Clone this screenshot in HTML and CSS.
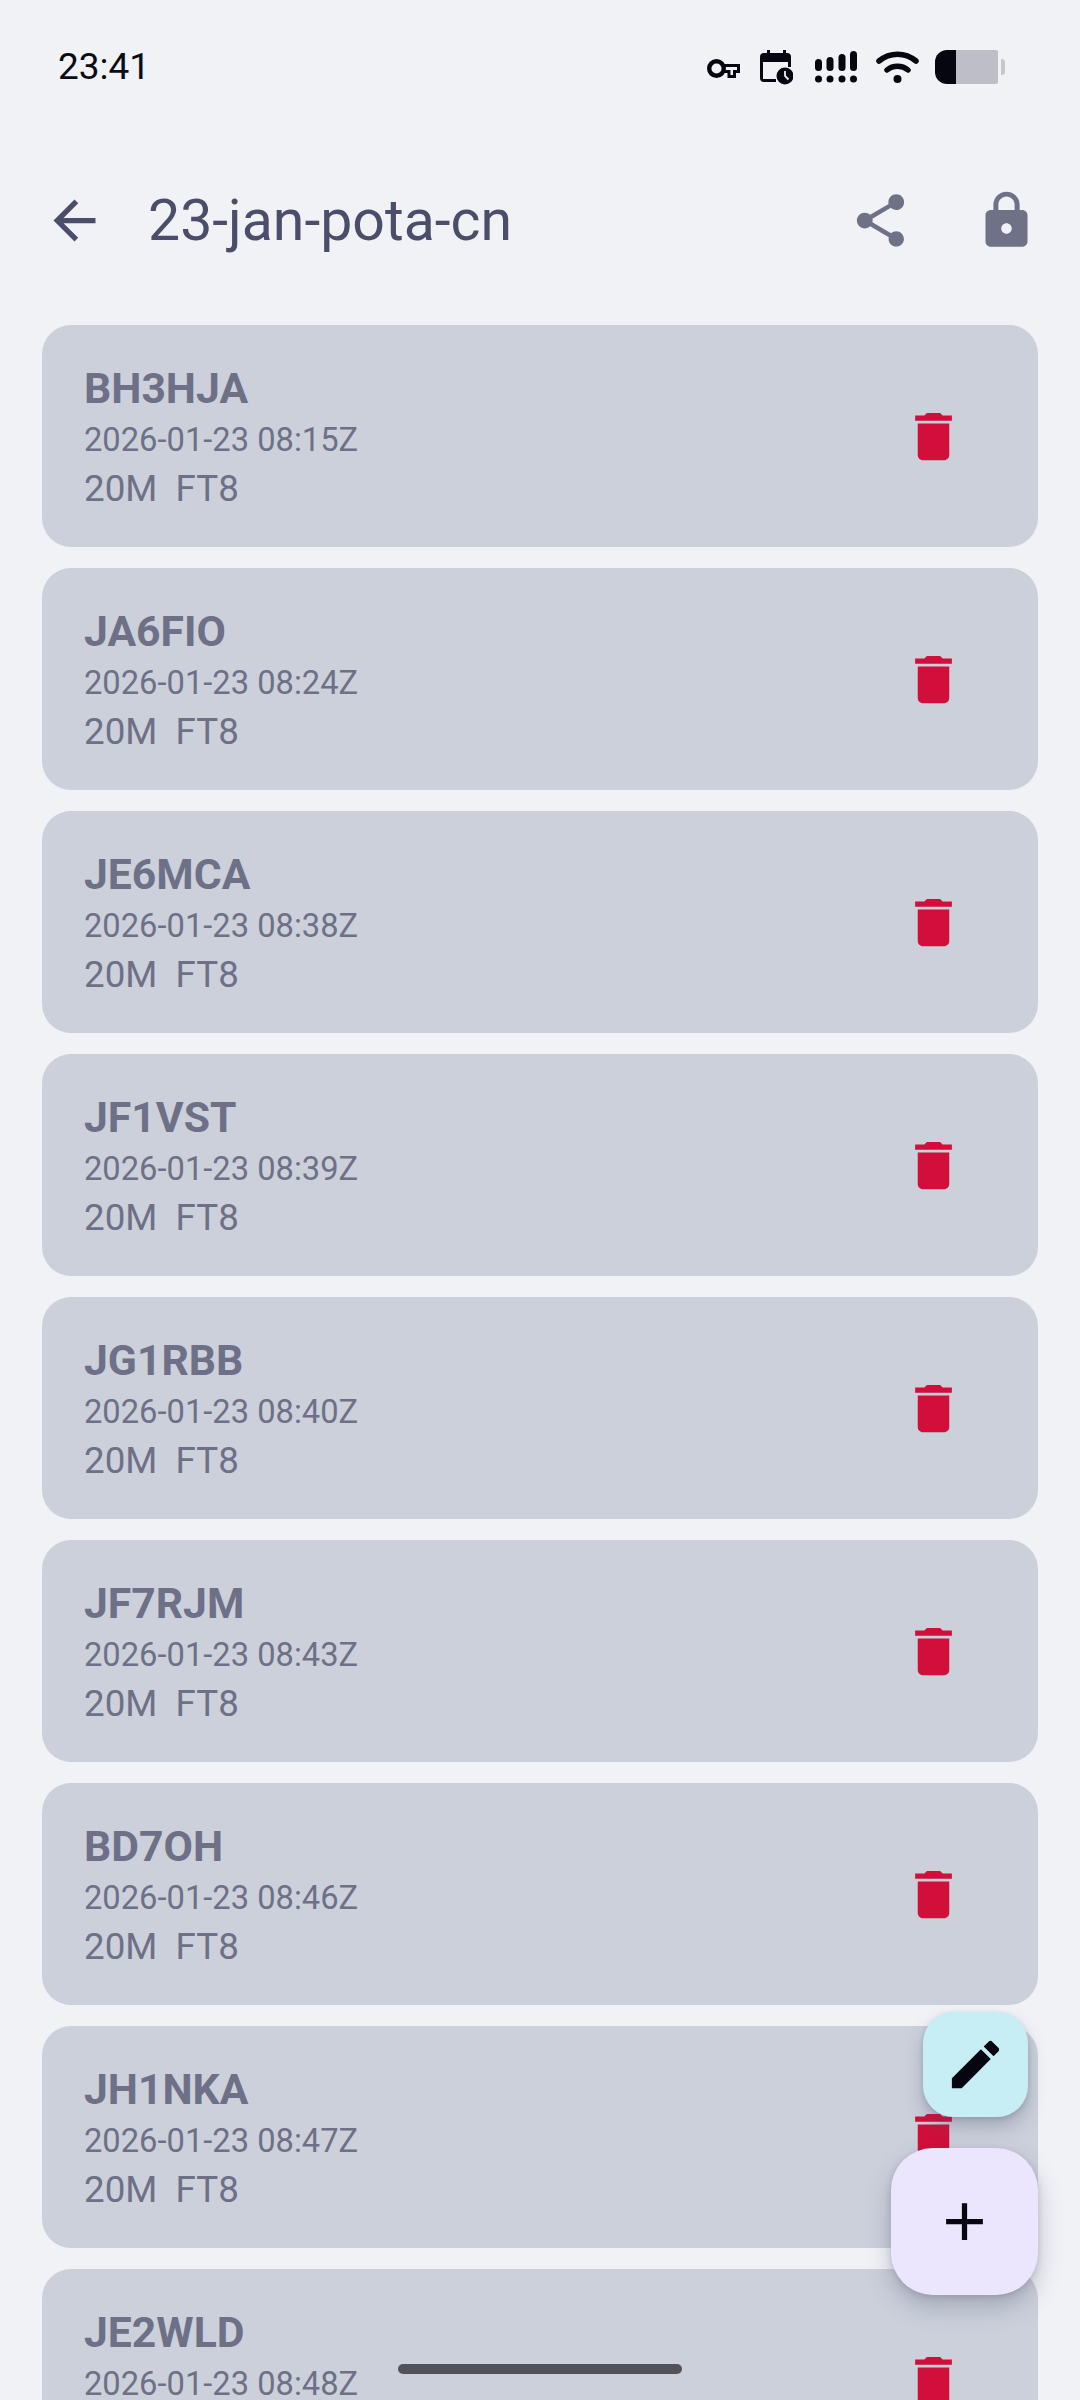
FILE: index.html
```html
<!DOCTYPE html>
<html lang="en">
<head>
<meta charset="utf-8">
<title>23-jan-pota-cn</title>
<link rel="stylesheet" href="styles.css">
</head>
<body>
<div class="screen">
  <header class="status">
    <span class="time">23:41</span>
    <div class="status-icons">
      <svg class="si-key" viewBox="0 0 33 19"><circle cx="9.500" cy="9.500" r="7.300" fill="none" stroke="#05060f" stroke-width="4.400"/><path d="M15 6.500H31.500V12.500H27.500V17.500H22V12.500H15" fill="none" stroke="#05060f" stroke-width="3"/></svg>
      <svg class="si-cal" viewBox="0 0 33 35"><path d="M7 0h3v3h13V0h3v3h1a4 4 0 0 1 4 4v10h-3v-5H3v17h13v3H4a4 4 0 0 1-4-4V7a4 4 0 0 1 4-4h3z" fill="#05060f"/><circle cx="25" cy="26" r="8.500" fill="#05060f"/><path d="M25 21v5l3.500 3.500" stroke="#f0f2f6" stroke-width="1.800" fill="none"/></svg>
      <svg class="si-sig" viewBox="0 0 42 32"><g fill="#05060f"><circle cx="3.500" cy="28" r="3.500"/><circle cx="15" cy="28" r="3.500"/><circle cx="27" cy="28" r="3.500"/><circle cx="38.500" cy="28" r="3.500"/><rect x="0" y="8" width="7" height="12" rx="3.500"/><rect x="11.500" y="6" width="7" height="14" rx="3.500"/><rect x="23.500" y="3" width="7" height="17" rx="3.500"/><rect x="35" y="0" width="7" height="20" rx="3.500"/></g></svg>
      <svg class="si-wifi" viewBox="0 0 43 32"><g fill="none" stroke="#05060f" stroke-width="5.500" stroke-linecap="round"><path d="M3 10C14 1 29 1 40 10"/><path d="M11 19c6-5 15-5 21 0"/></g><circle cx="21.500" cy="28" r="4" fill="#05060f"/></svg>
      <svg class="si-bat" viewBox="0 0 70 34"><path d="M21 0h39a6 6 0 0 1 3 1v32a6 6 0 0 1-3 1H21z" fill="#bdbec8"/><path d="M12 0h9v34h-9A12 12 0 0 1 0 22V12A12 12 0 0 1 12 0z" fill="#05060f"/><path d="M66 9h1a3 3 0 0 1 3 3v10a3 3 0 0 1-3 3h-1z" fill="#c6c7d0"/></svg>
    </div>
  </header>

  <nav class="toolbar">
    <svg class="icon icon-title" viewBox="0 0 24 24"><path d="M20 11H7.830l5.590-5.590L12 4l-8 8 8 8 1.410-1.410L7.830 13H20v-2z"/></svg>
    <h1 class="title">23-jan-pota-cn</h1>
    <svg class="icon icon-share" viewBox="0 0 24 24"><path d="M18 16.080c-.76 0-1.440.3-1.960.77L8.910 12.700c.05-.23.09-.46.09-.7s-.04-.47-.09-.7l7.050-4.110c.54.5 1.250.81 2.040.81 1.660 0 3-1.340 3-3s-1.340-3-3-3-3 1.340-3 3c0 .24.04.47.09.7L8.040 9.810C7.500 9.310 6.790 9 6 9c-1.660 0-3 1.340-3 3s1.340 3 3 3c.79 0 1.500-.31 2.040-.81l7.120 4.160c-.05.21-.08.43-.08.65 0 1.610 1.310 2.920 2.920 2.920 1.610 0 2.920-1.310 2.920-2.920s-1.310-2.920-2.920-2.920z"/></svg>
    <svg class="icon icon-lock" viewBox="0 0 24 24"><path d="M18 8h-1V6c0-2.760-2.240-5-5-5S7 3.240 7 6v2H6c-1.100 0-2 .9-2 2v10c0 1.100.9 2 2 2h12c1.100 0 2-.9 2-2V10c0-1.100-.9-2-2-2zm-6 9c-1.100 0-2-.9-2-2s.9-2 2-2 2 .9 2 2-.9 2-2 2zm3.100-9H8.900V6c0-1.710 1.390-3.100 3.100-3.100 1.710 0 3.100 1.390 3.100 3.100v2z"/></svg>
  </nav>

  <main class="list">
    <article class="card"><div class="info"><div class="call">BH3HJA</div><div class="date">2026-01-23 08:15Z</div><div class="band">20M  FT8</div></div><svg class="trash" viewBox="0 0 24 24"><path d="M6 19c0 1.100.9 2 2 2h8c1.100 0 2-.9 2-2V7H6v12zM19 4h-3.500l-1-1h-5l-1 1H5v2h14V4z"/></svg></article>
    <article class="card"><div class="info"><div class="call">JA6FIO</div><div class="date">2026-01-23 08:24Z</div><div class="band">20M  FT8</div></div><svg class="trash" viewBox="0 0 24 24"><path d="M6 19c0 1.100.9 2 2 2h8c1.100 0 2-.9 2-2V7H6v12zM19 4h-3.500l-1-1h-5l-1 1H5v2h14V4z"/></svg></article>
    <article class="card"><div class="info"><div class="call">JE6MCA</div><div class="date">2026-01-23 08:38Z</div><div class="band">20M  FT8</div></div><svg class="trash" viewBox="0 0 24 24"><path d="M6 19c0 1.100.9 2 2 2h8c1.100 0 2-.9 2-2V7H6v12zM19 4h-3.500l-1-1h-5l-1 1H5v2h14V4z"/></svg></article>
    <article class="card"><div class="info"><div class="call">JF1VST</div><div class="date">2026-01-23 08:39Z</div><div class="band">20M  FT8</div></div><svg class="trash" viewBox="0 0 24 24"><path d="M6 19c0 1.100.9 2 2 2h8c1.100 0 2-.9 2-2V7H6v12zM19 4h-3.500l-1-1h-5l-1 1H5v2h14V4z"/></svg></article>
    <article class="card"><div class="info"><div class="call">JG1RBB</div><div class="date">2026-01-23 08:40Z</div><div class="band">20M  FT8</div></div><svg class="trash" viewBox="0 0 24 24"><path d="M6 19c0 1.100.9 2 2 2h8c1.100 0 2-.9 2-2V7H6v12zM19 4h-3.500l-1-1h-5l-1 1H5v2h14V4z"/></svg></article>
    <article class="card"><div class="info"><div class="call">JF7RJM</div><div class="date">2026-01-23 08:43Z</div><div class="band">20M  FT8</div></div><svg class="trash" viewBox="0 0 24 24"><path d="M6 19c0 1.100.9 2 2 2h8c1.100 0 2-.9 2-2V7H6v12zM19 4h-3.500l-1-1h-5l-1 1H5v2h14V4z"/></svg></article>
    <article class="card"><div class="info"><div class="call">BD7OH</div><div class="date">2026-01-23 08:46Z</div><div class="band">20M  FT8</div></div><svg class="trash" viewBox="0 0 24 24"><path d="M6 19c0 1.100.9 2 2 2h8c1.100 0 2-.9 2-2V7H6v12zM19 4h-3.500l-1-1h-5l-1 1H5v2h14V4z"/></svg></article>
    <article class="card"><div class="info"><div class="call">JH1NKA</div><div class="date">2026-01-23 08:47Z</div><div class="band">20M  FT8</div></div><svg class="trash" viewBox="0 0 24 24"><path d="M6 19c0 1.100.9 2 2 2h8c1.100 0 2-.9 2-2V7H6v12zM19 4h-3.500l-1-1h-5l-1 1H5v2h14V4z"/></svg></article>
    <article class="card"><div class="info"><div class="call">JE2WLD</div><div class="date">2026-01-23 08:48Z</div><div class="band">20M  FT8</div></div><svg class="trash" viewBox="0 0 24 24"><path d="M6 19c0 1.100.9 2 2 2h8c1.100 0 2-.9 2-2V7H6v12zM19 4h-3.500l-1-1h-5l-1 1H5v2h14V4z"/></svg></article>
  </main>

  <button class="fab fab-edit" aria-label="Edit"><svg class="fab-icon" viewBox="0 0 24 24"><path d="M3 17.250V21h3.750L17.810 9.940l-3.750-3.750L3 17.250zM20.710 7.040c.39-.39.39-1.020 0-1.410l-2.340-2.340c-.39-.39-1.020-.39-1.410 0l-1.830 1.830 3.750 3.750 1.830-1.830z"/></svg></button>
  <button class="fab fab-add" aria-label="Add"><svg class="fab-icon" viewBox="0 0 24 24"><path d="M19 13h-6v6h-2v-6H5v-2h6V5h2v6h6v2z"/></svg></button>
  <div class="home-pill"></div>
</div>
</body>
</html>
```

FILE: styles.css
```css
* { box-sizing: border-box; }
html, body { margin: 0; padding: 0; }
body { background: #f0f2f6; font-family: Roboto, "Liberation Sans", sans-serif; }
.screen { position: relative; width: 1080px; height: 2400px; overflow: hidden; background: #f0f2f6; }

.status { height: 147px; padding: 0 75px 13px 58px; display: flex; align-items: center; justify-content: space-between; }
.time { font-size: 37px; line-height: 44px; color: #0b0c14; }
.status-icons { display: flex; align-items: center; }
.status-icons svg { display: block; }
.si-key { width: 33px; height: 19px; margin-top: 3px; }
.si-cal { width: 33px; height: 35px; margin-left: 20px; }
.si-sig { width: 42px; height: 32px; margin-left: 22px; }
.si-wifi { width: 43px; height: 32px; margin-left: 19px; }
.si-bat { width: 70px; height: 34px; margin-left: 16px; }

.toolbar { height: 147px; padding: 0 42px 0 43px; display: flex; align-items: center; }
.icon { width: 63px; height: 63px; flex: none; }
.icon-title { fill: #4b4e6a; }
.icon-share { fill: #6f7187; }
.icon-lock { fill: #6f7187; margin-left: 63px; }
.title { flex: 1; margin: 0 0 0 42px; font-size: 57.200px; font-weight: 400; line-height: 70px; color: #4b4e6a; }

.list { padding: 31px 42px 0; display: flex; flex-direction: column; gap: 21px; }
.card { flex: none; height: 222px; background: #cbd0db; border-radius: 29px; padding: 0 73px 0 42px; display: flex; justify-content: space-between; align-items: center; }
.info { display: flex; flex-direction: column; padding-top: 3px; color: #6e7087; }
.call { font-size: 42.700px; font-weight: 700; line-height: 55px; }
.date { font-size: 32.700px; line-height: 48px; }
.band { font-size: 36.750px; line-height: 50px; white-space: pre; }
.trash { width: 63px; height: 63px; fill: #d10f3a; flex: none; }

.fab { position: absolute; border: 0; padding: 0; display: flex; align-items: center; justify-content: center; }
.fab-edit { left: 923px; top: 2012px; width: 105px; height: 105px; border-radius: 31px; background: #c8eef5; box-shadow: 0 10px 18px rgba(70, 72, 100, .28), 0 2px 5px rgba(70, 72, 100, .2); }
.fab-add { left: 891px; top: 2148px; width: 147px; height: 147px; border-radius: 42px; background: #ebe6fe; box-shadow: 0 12px 24px rgba(70, 72, 100, .28), 0 2px 6px rgba(70, 72, 100, .2); }
.fab-icon { width: 63px; height: 63px; fill: #05060f; display: block; }
.home-pill { position: absolute; left: 398px; top: 2364px; width: 284px; height: 10px; border-radius: 5px; background: #525258; }
```
